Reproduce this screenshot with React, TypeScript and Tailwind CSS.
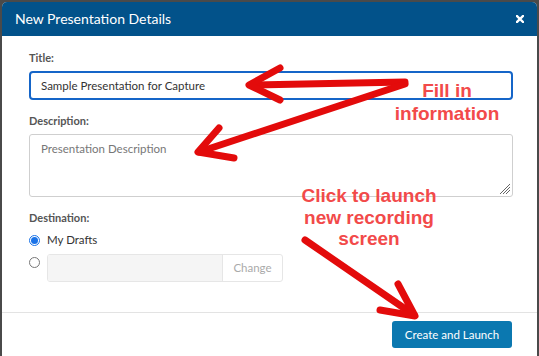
import React from "react";

export default function App() {
  const font = { fontFamily: "Lato, 'Open Sans', 'Liberation Sans', sans-serif" };
  return (
    <div className="relative w-[539px] h-[356px] overflow-hidden bg-[#4a4a4a] pl-[2px] pr-[2px] pt-[2px]" style={font}>
      <div className="flex h-full flex-col rounded-t-[5px] bg-white">
        <div className="flex h-[34px] items-center justify-between rounded-t-[5px] bg-[#02528a] pl-[13px] pr-[13px]">
          <span className="text-[14px] leading-none text-white">New Presentation Details</span>
          <svg width="8" height="8" viewBox="0 0 8 8" className="mt-[-1px]">
            <path d="M1 1 L7 7 M7 1 L1 7" stroke="white" strokeWidth="2.4" strokeLinecap="square" />
          </svg>
        </div>
        <div className="flex flex-col pl-[27px] pr-[24px] pt-[15px]">
          <label className="text-[11px] font-bold leading-[14px] text-[#555]">Title:</label>
          <div className="mt-[6px] flex h-[29px] items-center rounded-[4px] border-2 border-[#1565c8] pl-[10px] text-[11.5px] text-[#333]">
            Sample Presentation for Capture
          </div>
          <label className="mt-[14px] text-[11px] font-bold leading-[14px] text-[#555]">Description:</label>
          <div className="relative mt-[6px] h-[63px] rounded-[3px] border border-[#cfcfcf] pl-[11px] pt-[7px] text-[11.5px] leading-[14px] text-[#777]">
            Presentation Description
            <svg width="12" height="12" viewBox="0 0 12 12" className="absolute bottom-[1px] right-[1px]">
              <path d="M11 1 L1 11 M11 4 L4 11 M11 7 L7 11" stroke="#666" strokeWidth="1" />
            </svg>
          </div>
          <label className="mt-[14px] text-[11px] font-bold leading-[14px] text-[#555]">Destination:</label>
          <div className="mt-[8px] flex h-[14px] items-center gap-[7px]">
            <span className="flex h-[11px] w-[11px] items-center justify-center rounded-full border border-[#1a73e8] bg-white">
              <span className="h-[7px] w-[7px] rounded-full bg-[#1a73e8]" />
            </span>
            <span className="text-[11.5px] text-[#333]">My Drafts</span>
          </div>
          <div className="mt-[7px] flex items-start gap-[7px]">
            <span className="mt-[3px] h-[11px] w-[11px] rounded-full border border-[#777] bg-white" />
            <div className="flex h-[28px] w-[236px] overflow-hidden rounded-[3px] border border-[#e6e6e6]">
              <div className="w-[174px] bg-[#f5f5f5]" />
              <div className="flex flex-1 items-center justify-center border-l border-[#e6e6e6] text-[11.5px] text-[#aaa]">Change</div>
            </div>
          </div>
        </div>
        <div className="mt-auto flex justify-end border-t border-[#e3e3e3] pb-[8px] pr-[25px] pt-[8px]">
          <button className="h-[27px] w-[120px] rounded-[3px] bg-[#0b78b0] text-[11.5px] text-white">Create and Launch</button>
        </div>
      </div>

      <svg className="pointer-events-none absolute left-0 top-0" width="539" height="356" viewBox="0 0 539 356">
        <g stroke="#e30b0b" strokeWidth="7" strokeLinecap="round" strokeLinejoin="round" fill="none">
          <path d="M405 82 L251 85" />
          <path d="M280 68 L249 85 L280 100" />
          <path d="M405 84 L199 152" />
          <path d="M219 128 L198 152 L234 158" />
          <path d="M305 240 L414 315" />
          <path d="M398 284 L415 316 L380 310" />
        </g>
      </svg>
      <div
        className="absolute left-[377px] top-[79px] w-[140px] text-center text-[19px] font-bold leading-[23px] text-[#f24a4a]"
        style={{ fontFamily: "'Liberation Sans', Arial, sans-serif" }}
      >
        Fill in
        <br />
        information
      </div>
      <div
        className="absolute left-[289px] top-[185px] w-[160px] text-center text-[19px] font-bold leading-[21.5px] text-[#f24a4a]"
        style={{ fontFamily: "'Liberation Sans', Arial, sans-serif" }}
      >
        Click to launch
        <br />
        new recording
        <br />
        screen
      </div>
    </div>
  );
}
